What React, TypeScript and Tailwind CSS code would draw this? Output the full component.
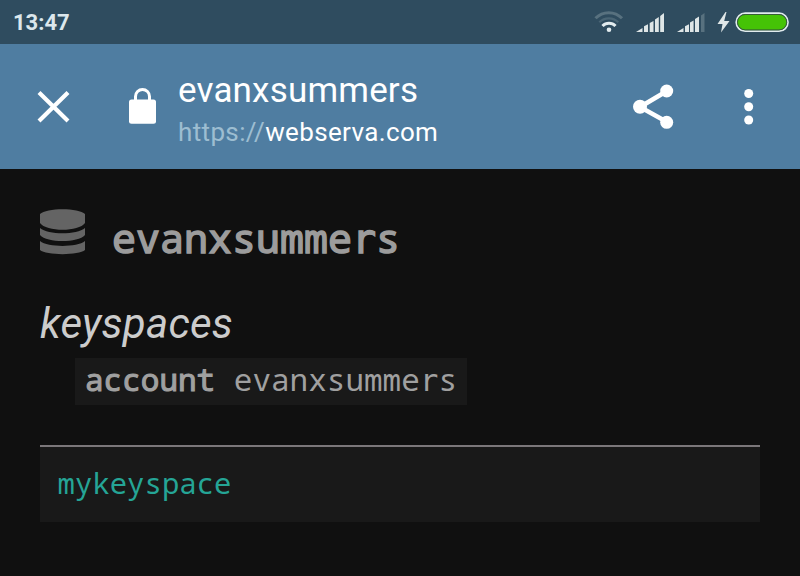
import React from "react";

const mono = "font-['Noto_Sans_Mono','DejaVu_Sans_Mono',monospace]";

function StatusIcons() {
  return (
    <svg className="shrink-0" width="206" height="44" viewBox="594 0 206 44" aria-hidden="true">
      <g fill="none">
        <path d="M595.5 18.300a18.400 18.400 0 0 1 26.500 0" stroke="#58717f" strokeWidth="3" />
        <path d="M599.300 22.300a13.500 13.500 0 0 1 19 0" stroke="#4a6575" strokeWidth="2.200" />
        <path d="M602.500 26a9 9 0 0 1 13 0" stroke="#e3ecef" strokeWidth="3" />
      </g>
      <circle cx="609" cy="29.800" r="2.300" fill="#e3ecef" />
      <g fill="#dfe6e7">
        <path d="M636 32l6.500-4v4zM644 26.200l4-2v7.800h-4zM649.700 23l3.800-2v11h-3.800zM655 19.500l3.800-2.500v15H655zM660.200 16l3.800-3v19h-3.800z" />
        <path d="M677 32l6.500-4v4zM685 26.200l4-2v7.800h-4zM690 22.500l3.600-2v11.500H690zM695 19l4-2.500V32h-4z" />
        <path d="M701 15.500l3.500-2.500v19H701z" fill="#58717f" />
        <path d="M725.500 12l-8 12h5l-1.500 8.500 8.500-11.500h-5.300l2.300-9z" />
      </g>
      <rect x="736.200" y="13.200" width="51.800" height="18" rx="9" fill="#315264" stroke="#e1ebee" strokeWidth="1.700" />
      <rect x="737.500" y="14.500" width="49.200" height="15.400" rx="7.700" fill="#45c306" stroke="#365d35" strokeWidth="1" />
    </svg>
  );
}

function Toolbar() {
  return (
    <header className="flex h-[125px] bg-[#4f7da1] font-[Roboto,sans-serif] text-white">
      <svg className="w-[178px] shrink-0" height="125" viewBox="0 44 178 125" aria-label="Close, secure connection">
        <path d="M39 92.500L68 121M68 92.500L39 121" stroke="white" strokeWidth="4.200" />
        <rect x="129" y="99.500" width="27" height="24.300" rx="2.500" fill="white" />
        <path d="M135.500 101v-4.500a7 7 0 0 1 14 0v4.500" fill="none" stroke="white" strokeWidth="3" />
      </svg>
      <div className="w-[444px] pt-[25px]">
        <div className="h-[43px] text-[35px] leading-[43px] tracking-[0.180px]">evanxsummers</div>
        <div className="h-[40px] text-[26px] leading-[40px] tracking-[0.360px]">
          <span className="text-[#9dbdd1]">https://</span>webserva.com
        </div>
      </div>
      <svg className="w-[178px]" height="125" viewBox="622 44 178 125" aria-label="Share and more">
        <path d="M667 91L640 107L667 122" fill="none" stroke="white" strokeWidth="4.600" />
        <g fill="white">
          <circle cx="666.700" cy="91" r="6.500" />
          <circle cx="640" cy="106.700" r="7" />
          <circle cx="666.700" cy="122.300" r="6.500" />
          <circle cx="748.700" cy="93.500" r="4.500" />
          <circle cx="748.700" cy="106.700" r="4.500" />
          <circle cx="748.700" cy="120" r="4.500" />
        </g>
      </svg>
    </header>
  );
}

// The account name uses a plain "r" without slab serifs.
function AccountName() {
  return (
    <>
      evanxsumme<span className="font-['DejaVu_Sans_Mono',monospace]">r</span>s
    </>
  );
}

export default function App() {
  return (
    <div className="h-[576px] w-[800px] overflow-hidden bg-[#101010]">
      <div className="flex h-[44px] items-center justify-between bg-[#2f4c5f] font-[Roboto,sans-serif]">
        <span className="pl-[13px] text-[22px] leading-[42px] pt-[2px] font-bold text-[#dce7ec]">13:47</span>
        <StatusIcons />
      </div>
      <Toolbar />
      <main className="px-[40px]">
        <h1 className="flex h-[132px] pt-[40px]">
          <svg width="45" height="46" viewBox="0 0 45 46" aria-hidden="true" className="shrink-0 fill-[#646464]">
            <path d="M0 5C6-1.500 39-1.500 45 5v9C39 23 6 23 0 14z" />
            <path d="M0 19c8 7 37 7 45 0v7c-7 8-38 8-45 0z" />
            <path d="M0 32c8 6.500 37 6.500 45 0v9c-6 5.500-39 5.500-45 0z" />
          </svg>
          <span className={`${mono} pl-[27px] text-[40px] leading-[58px] text-[#9c9c9c] [-webkit-text-stroke:1.500px_#9c9c9c]`}><AccountName /></span>
        </h1>
        <h2 className="h-[57px] font-[Roboto,sans-serif] text-[42px] leading-[46px] tracking-[0.250px] italic text-[#cccccc]">keyspaces</h2>
        <div className={`${mono} ml-[35px] h-[47px] w-[392px] bg-[#191919] pl-[10px] text-[31px] leading-[42px] whitespace-pre text-[#a0a0a0]`}>
          <span className="[-webkit-text-stroke:1.100px_#a0a0a0]">account</span> <AccountName />
        </div>
        <div className={`${mono} mt-[40px] h-[77px] border-t-2 border-[#7b777a] bg-[#191919] pl-[17.500px] text-[29px] leading-[71px] text-[#25a596]`}>mykeyspace</div>
      </main>
    </div>
  );
}
